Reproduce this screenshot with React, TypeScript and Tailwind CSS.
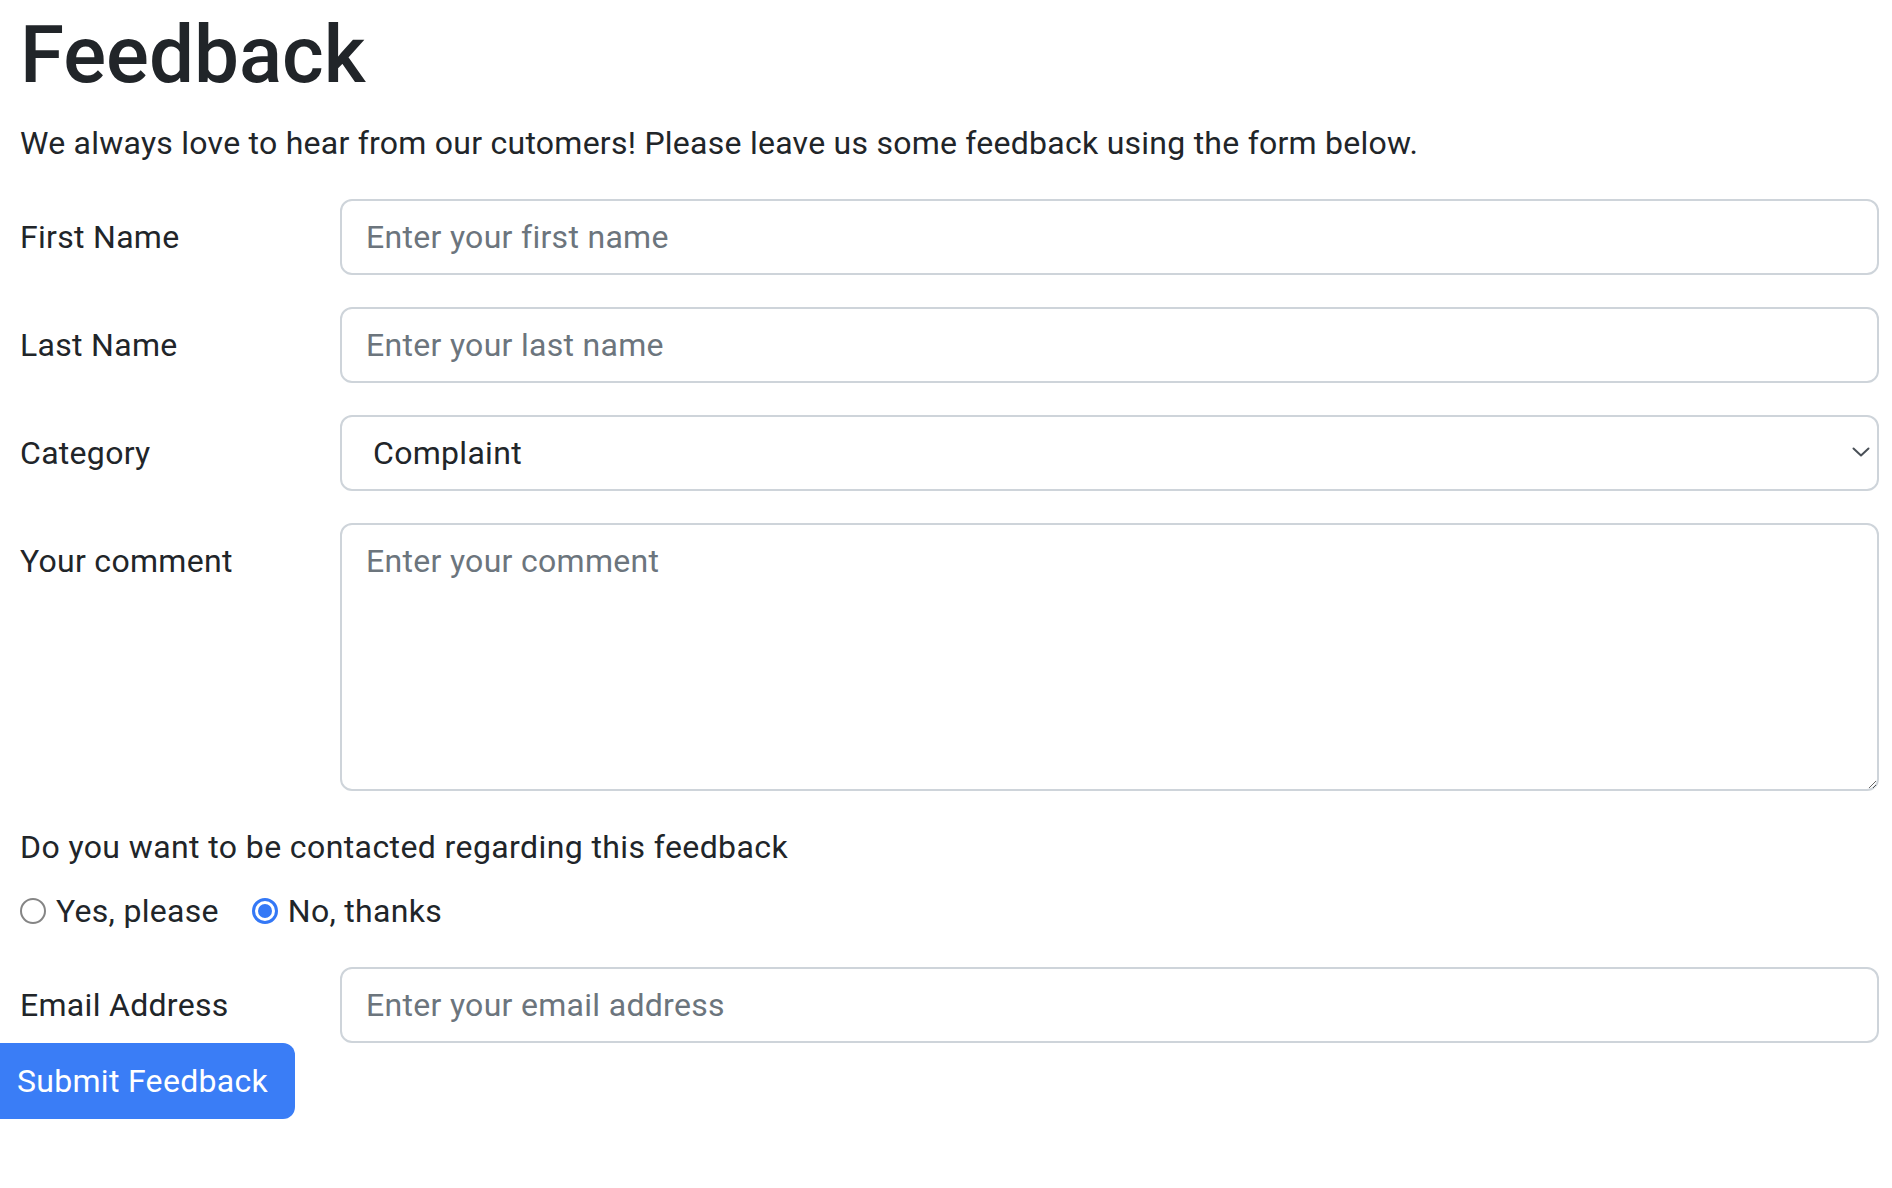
import { useState } from 'react';

const inputCls =
  'w-full h-[76px] rounded-[12px] border-2 border-[#ced4da] bg-white px-[24px] text-[32px] leading-[48px] tracking-[0.3px] text-[#212529] placeholder:text-[#6c757d] outline-none';

function Row({ label, children, top = false, last = false }: { label: string; children: React.ReactNode; top?: boolean; last?: boolean }) {
  return (
    <div className={`grid grid-cols-[320px_1fr] ${top ? 'items-start' : 'items-center'} ${last ? '' : 'mb-[32px]'}`}>
      <label className={`text-[32px] leading-[48px] tracking-[0.3px] text-[#212529] ${top ? 'pt-[14px]' : ''}`}>{label}</label>
      {children}
    </div>
  );
}

function Radio({ checked, label, onClick }: { checked: boolean; label: string; onClick: () => void }) {
  return (
    <label className="flex items-center gap-[10px] cursor-pointer" onClick={onClick}>
      {checked ? (
        <span className="w-[26px] h-[26px] rounded-full border-[3px] border-[#3478f6] flex items-center justify-center">
          <span className="w-[14px] h-[14px] rounded-full bg-[#3478f6]" />
        </span>
      ) : (
        <span className="w-[26px] h-[26px] rounded-full border-2 border-[#858585] bg-white" />
      )}
      <span className="text-[32px] leading-[48px] tracking-[0.3px] text-[#212529]">{label}</span>
    </label>
  );
}

export default function App() {
  const [contact, setContact] = useState('no');

  return (
    <div className="min-h-screen bg-white" style={{ fontFamily: 'Roboto, "Liberation Sans", sans-serif' }}>
      <div className="pl-[20px] pr-[13px] pt-[7px]">
        <h1 className="text-[80px] leading-[96px] font-medium text-[#212529] mb-[16px]">Feedback</h1>
        <p className="text-[32px] leading-[48px] tracking-[0.25px] text-[#212529] mb-[32px]">
          We always love to hear from our cutomers! Please leave us some feedback using the form below.
        </p>

        <Row label="First Name">
          <input className={inputCls} placeholder="Enter your first name" />
        </Row>
        <Row label="Last Name">
          <input className={inputCls} placeholder="Enter your last name" />
        </Row>
        <Row label="Category">
          <div className="relative">
            <select className={`${inputCls} appearance-none pl-[31px] text-[#343a40]`} defaultValue="Complaint">
              <option>Complaint</option>
              <option>Suggestion</option>
              <option>Compliment</option>
            </select>
            <svg className="absolute right-[9px] top-[31px] pointer-events-none" width="18" height="12" viewBox="0 0 18 12" fill="none">
              <path d="M1.5 2.5 L9 9.5 L16.5 2.5" stroke="#495057" strokeWidth="2" strokeLinecap="round" strokeLinejoin="round" />
            </svg>
          </div>
        </Row>
        <Row label="Your comment" top>
          <textarea rows={5} className={`${inputCls} h-[268px] py-[12px] block resize-y`} placeholder="Enter your comment" />
        </Row>

        <div className="text-[32px] leading-[48px] tracking-[0.4px] text-[#212529] mb-[16px]">
          Do you want to be contacted regarding this feedback
        </div>
        <div className="flex items-center gap-[33px] mb-[32px]">
          <Radio checked={contact === 'yes'} label="Yes, please" onClick={() => setContact('yes')} />
          <Radio checked={contact === 'no'} label="No, thanks" onClick={() => setContact('no')} />
        </div>

        <Row label="Email Address" last>
          <input type="email" className={inputCls} placeholder="Enter your email address" />
        </Row>
      </div>
      <button className="h-[76px] pl-[17px] pr-[27px] rounded-r-[12px] bg-[#3a7df6] text-white text-[32px] leading-[48px] tracking-[0.3px]">
        Submit Feedback
      </button>
    </div>
  );
}
